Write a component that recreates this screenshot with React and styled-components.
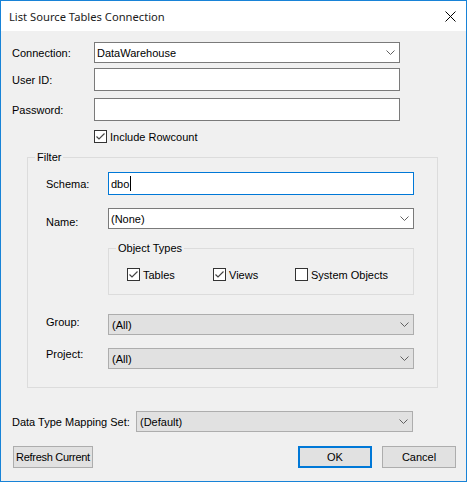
import React from 'react'
import styled, { createGlobalStyle } from 'styled-components'

const Global = createGlobalStyle`
  html, body { margin: 0; padding: 0; background: #f0f0f0; }
  * { box-sizing: border-box; }
`

const Window = styled.div`
  width: 467px;
  height: 482px;
  border: 1px solid #1883d7;
  background: #f0f0f0;
  display: flex;
  flex-direction: column;
  font-family: "Liberation Sans", Arial, sans-serif;
  font-size: 11px;
  color: #000;
`

const TitleBar = styled.div`
  height: 30px;
  background: #fff;
  display: flex;
  align-items: center;
  justify-content: space-between;
  padding: 0 10px 0 8px;
  font-family: "Noto Sans", sans-serif;
  font-size: 11.2px;
  color: #1b1b1b;
`

const Body = styled.div`
  flex: 1;
  padding: 0 10px 0 11px;
  display: flex;
  flex-direction: column;
`

const Row = styled.div`
  display: flex;
  align-items: center;
  margin-top: ${p => p.$top || 0}px;
  margin-left: ${p => p.$left || 0}px;
`

const Label = styled.span`
  width: ${p => p.$w}px;
  flex: none;
  white-space: nowrap;
  position: relative;
  top: ${p => p.$dy || 0}px;
`

const TextBox = styled.div`
  width: 306px;
  height: ${p => p.$h || 23}px;
  background: #fff;
  border: 1px solid ${p => (p.$focus ? '#0078d7' : '#7a7a7a')};
  display: flex;
  align-items: center;
  padding-left: 2px;
`

const Caret = styled.span`
  width: 1px;
  height: 15px;
  background: #000;
  margin-left: 1px;
`

const ComboBox = styled.div`
  width: ${p => p.$w || 306}px;
  height: 21px;
  background: ${p => (p.$disabled ? '#e1e1e1' : '#fff')};
  border: 1px solid ${p => (p.$disabled ? '#adadad' : '#7a7a7a')};
  display: flex;
  align-items: center;
  justify-content: space-between;
  padding: 0 4px 0 ${p => (p.$disabled ? 3 : 2)}px;
`

const Chevron = () => (
  <svg width="9" height="5" viewBox="0 0 9 5">
    <path d="M0.5 0.5 L4.5 4.5 L8.5 0.5" fill="none" stroke="#606060" strokeWidth="1" />
  </svg>
)

const Check = styled.label`
  display: flex;
  align-items: center;
  gap: 3px;
  white-space: nowrap;
`

const Box = styled.span`
  width: 13px;
  height: 13px;
  background: #fff;
  border: 1px solid #333;
  display: flex;
  align-items: center;
  justify-content: center;
`

const CheckBox = ({ checked, children }) => (
  <Check>
    <Box>
      {checked && (
        <svg width="11" height="11" viewBox="0 0 11 11">
          <path d="M1.5 5.5 L4 8 L9.5 2.5" fill="none" stroke="#444" strokeWidth="1.2" />
        </svg>
      )}
    </Box>
    {children}
  </Check>
)

const Group = styled.div`
  position: relative;
  border: 1px solid #dcdcdc;
  width: ${p => p.$w}px;
  height: ${p => p.$h}px;
  margin-top: ${p => p.$top || 0}px;
  margin-left: ${p => p.$left || 0}px;
  padding: ${p => p.$pad};
  display: flex;
  flex-direction: column;
`

const Legend = styled.span`
  position: absolute;
  top: -8px;
  left: ${p => p.$x}px;
  padding: 0 2px;
  background: #f0f0f0;
  line-height: 14px;
`

const Checks = styled.div`
  display: flex;
`

const CheckSlot = styled.div`
  width: ${p => p.$w}px;
`

const ButtonRow = styled.div`
  display: flex;
  margin-top: 14px;
  margin-left: 1px;
`

const Button = styled.button`
  width: ${p => p.$w || 74}px;
  height: 22px;
  margin-left: ${p => p.$gap || 0}px;
  background: #e1e1e1;
  border: ${p => (p.$default ? '2px solid #0078d7' : '1px solid #adadad')};
  font-family: "Liberation Sans", Arial, sans-serif;
  font-size: 11px;
  letter-spacing: ${p => p.$tight ? '-0.3px' : 'normal'};
  white-space: nowrap;
  overflow: hidden;
  color: #000;
  padding: 0;
`

export default function App() {
  return (
    <Window>
      <Global />
      <TitleBar>
        <span>List Source Tables Connection</span>
        <svg width="11" height="11" viewBox="0 0 11 11">
          <path d="M0.5 0.5 L10.5 10.5 M10.5 0.5 L0.5 10.5" stroke="#000" strokeWidth="1" />
        </svg>
      </TitleBar>
      <Body>
        <Row $top={11}>
          <Label $w={82}>Connection:</Label>
          <ComboBox>DataWarehouse<Chevron /></ComboBox>
        </Row>
        <Row $top={5}>
          <Label $w={82}>User ID:</Label>
          <TextBox />
        </Row>
        <Row $top={7}>
          <Label $w={82}>Password:</Label>
          <TextBox />
        </Row>
        <Row $top={9} $left={82}>
          <CheckBox checked>Include Rowcount</CheckBox>
        </Row>

        <Group $w={411} $h={231} $top={14} $left={15} $pad="14px 0 0 18px">
          <Legend $x={7}>Filter</Legend>
          <Row>
            <Label $w={62}>Schema:</Label>
            <TextBox $focus>dbo<Caret /></TextBox>
          </Row>
          <Row $top={13}>
            <Label $w={62} $dy={3}>Name:</Label>
            <ComboBox>(None)<Chevron /></ComboBox>
          </Row>
          <Group $w={306} $h={47} $top={19} $left={62} $pad="19px 0 0 18px">
            <Legend $x={7}>Object Types</Legend>
            <Checks>
              <CheckSlot $w={86}><CheckBox checked>Tables</CheckBox></CheckSlot>
              <CheckSlot $w={82}><CheckBox checked>Views</CheckBox></CheckSlot>
              <CheckSlot $w={100}><CheckBox>System Objects</CheckBox></CheckSlot>
            </Checks>
          </Group>
          <Row $top={19}>
            <Label $w={62} $dy={-3}>Group:</Label>
            <ComboBox $disabled>(All)<Chevron /></ComboBox>
          </Row>
          <Row $top={13}>
            <Label $w={62} $dy={-5}>Project:</Label>
            <ComboBox $disabled>(All)<Chevron /></ComboBox>
          </Row>
        </Group>

        <Row $top={23}>
          <Label $w={124}>Data Type Mapping Set:</Label>
          <ComboBox $disabled $w={277}>(Default)<Chevron /></ComboBox>
        </Row>
        <ButtonRow>
          <Button $w={80} $tight>Refresh Current</Button>
          <Button $gap={205} $default>OK</Button>
          <Button $gap={10}>Cancel</Button>
        </ButtonRow>
      </Body>
    </Window>
  )
}
